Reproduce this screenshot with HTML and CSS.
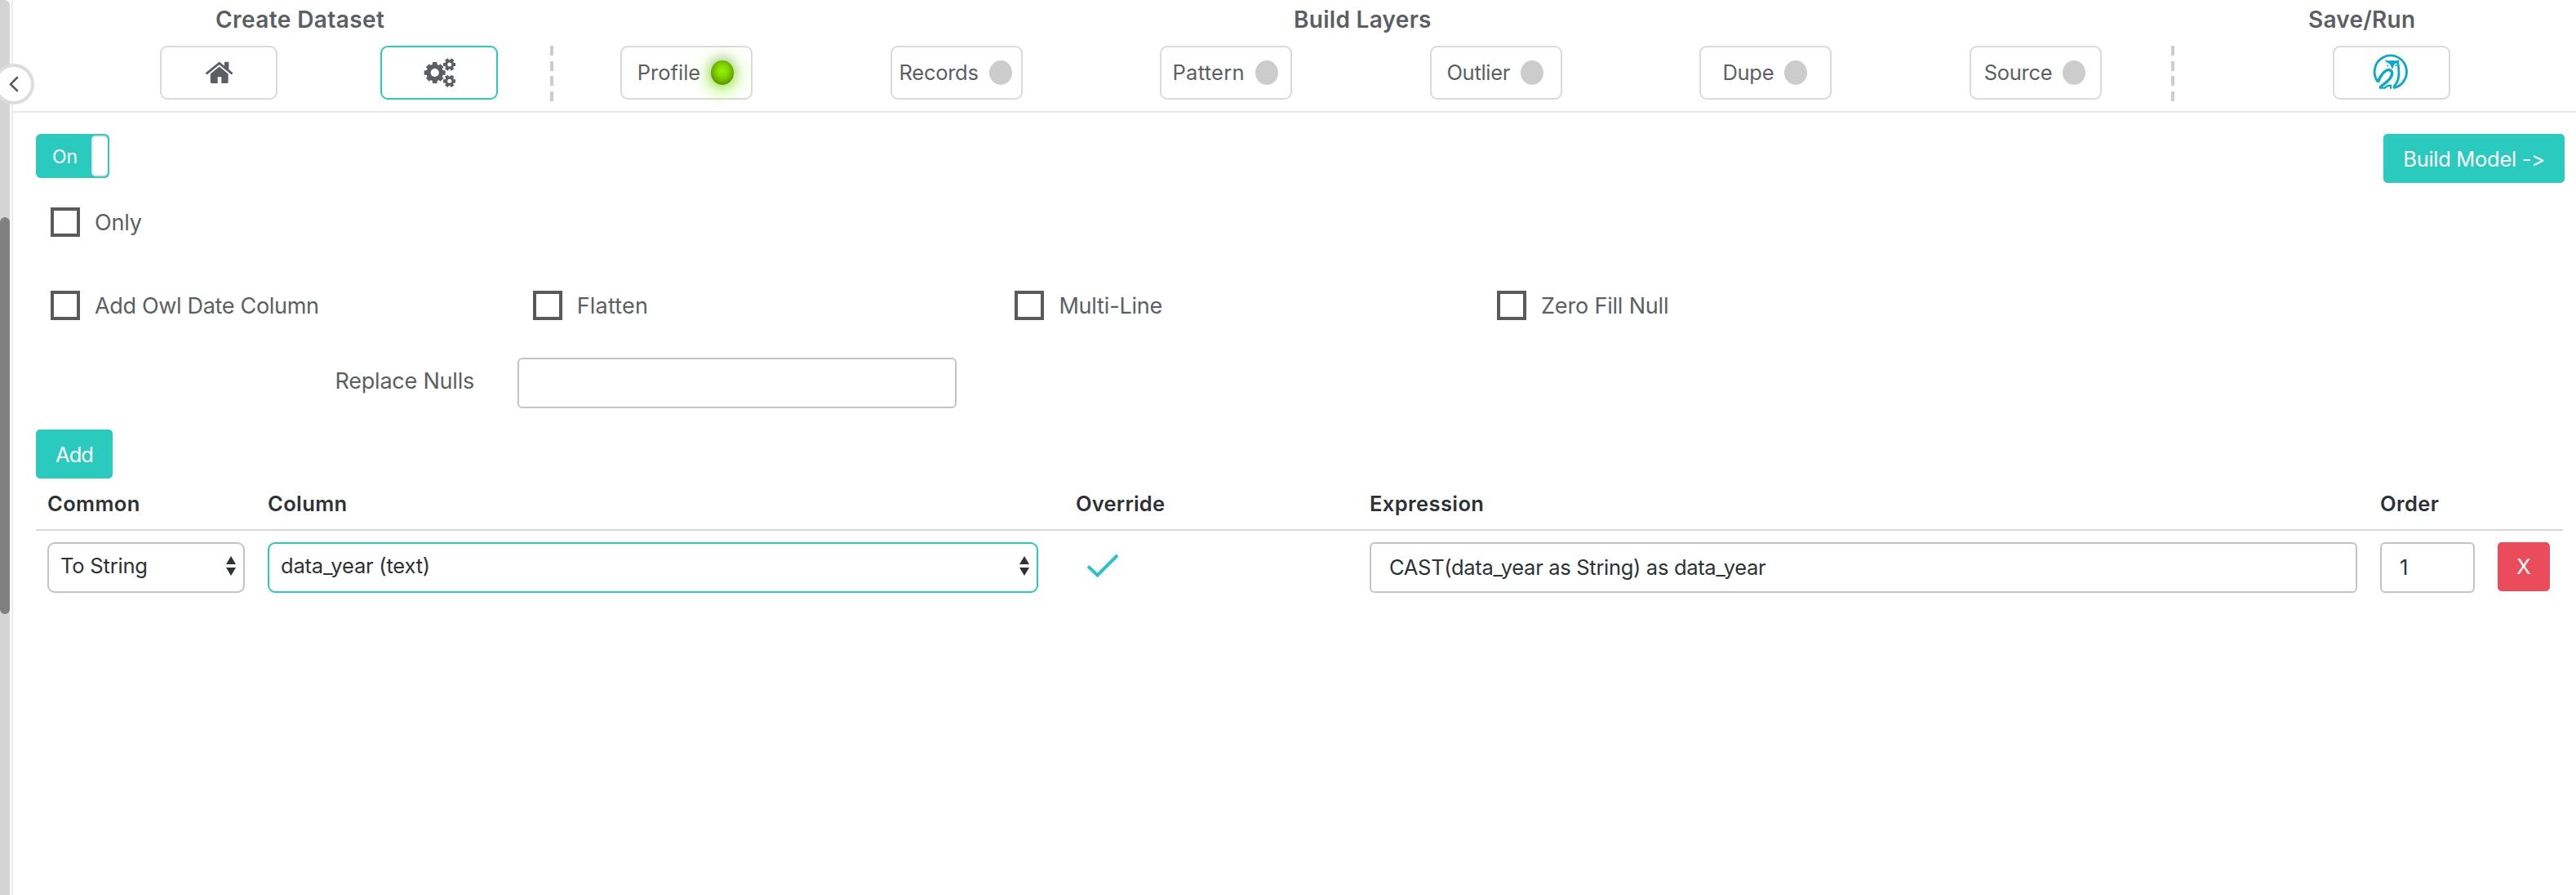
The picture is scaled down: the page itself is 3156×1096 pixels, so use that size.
FILE: index.html
```html
<!DOCTYPE html>
<html lang="en">
<head>
<meta charset="utf-8">
<title>Build Layers</title>
<link rel="stylesheet" href="styles.css">
</head>
<body>
<div class="app">
  <aside class="scroll-track"><div class="scroll-thumb"></div></aside>
  <button class="collapse" aria-label="Collapse">
    <svg width="12" height="20" viewBox="0 0 12 20"><path d="M10 2L2 10.2L10 18" fill="none" stroke="#595c5f" stroke-width="2.6" stroke-linecap="round"/></svg>
  </button>
  <div class="page">
    <header class="header">
      <div class="titles">
        <h2 class="title-create">Create Dataset</h2>
        <h2 class="title-build">Build Layers</h2>
        <h2 class="title-save">Save/Run</h2>
      </div>
      <nav class="steps">
        <div class="step-group create-group">
          <button class="step" aria-label="Home">
            <svg width="34" height="28" viewBox="0 0 34 28" fill="#5b5f63"><path d="M24 1.6q0-.8.8-.8h3.7q.8 0 .8.8v10.2L24 7.5z"/><path d="M2.6 14.6L17.7 2.3L32.6 14.6" fill="none" stroke="#5b5f63" stroke-width="2.8" stroke-linecap="round" stroke-linejoin="round"/><path d="M17.7 6.4L28.6 15.4V25.6q0 1.4-1.4 1.4H20.3V19.2h-4.6V27H8.2q-1.4 0-1.4-1.4V15.4z"/></svg>
          </button>
          <button class="step step-active" aria-label="Settings">
            <svg width="40" height="36" viewBox="0 0 40 36" stroke="#5b5f63" fill="#5b5f63">
              <g stroke-width="5.6"><path d="M14.7 5V31M1.7 18H27.7M5.9 9.2L23.5 26.8M5.9 26.8L23.5 9.2"/></g>
              <circle cx="14.7" cy="18" r="10.4" stroke="none"/><circle cx="14.7" cy="18" r="5.1" fill="#fff" stroke="none"/>
              <g stroke-width="4.2"><path d="M25 8H40.400M28.900 1.4L36.500 14.600M36.500 1.4L28.900 14.600"/><path d="M25 28.300H40.400M28.900 21.700L36.500 34.900M36.500 21.700L28.900 34.900"/></g>
              <circle cx="32.700" cy="8" r="5.700" stroke="none"/><circle cx="32.700" cy="8" r="2.500" fill="#fff" stroke="none"/>
              <circle cx="32.700" cy="28.300" r="5.700" stroke="none"/><circle cx="32.700" cy="28.300" r="2.500" fill="#fff" stroke="none"/>
            </svg>
          </button>
        </div>
        <div class="divider"></div>
        <div class="layers">
          <button class="layer">Profile<span class="led led-on"></span></button>
          <button class="layer ls-tight">Records<span class="led"></span></button>
          <button class="layer ls-wide">Pattern<span class="led"></span></button>
          <button class="layer ls-tight">Outlier<span class="led"></span></button>
          <button class="layer ls-tight">Dupe<span class="led"></span></button>
          <button class="layer ls-tight">Source<span class="led"></span></button>
        </div>
        <div class="divider"></div>
        <button class="step run" aria-label="Run">
          <svg class="owl" width="45" height="47" viewBox="0 0 135 141" fill="none" stroke="#0aa9c6" stroke-width="8.5" stroke-linejoin="round">
            <path d="M19 109A59 60 0 1 1 76 131"/>
            <path d="M19 110C28 84 46 62 61 65C75 69 74 83 62 98C52 110 38 118 26 130" stroke-width="10"/>
            <path d="M24 131H44Q55 120 66 122V134" stroke-width="7"/>
            <path d="M91 36C98 60 98 95 88 112C82 121 79 125 76 131"/>
            <path d="M45 27C54 33 62 30 72 30C82 30 89 33 98 27L95 40C84 37 78 44 75 56L71 61L67 52C64 43 58 39 50 37Z" fill="#0aa9c6" stroke="none"/>
            <circle cx="55" cy="49" r="3" fill="#0aa9c6" stroke="none"/><circle cx="85" cy="48" r="3" fill="#0aa9c6" stroke="none"/>
          </svg>
        </button>
      </nav>
    </header>
    <main class="content">
      <div class="top-row">
        <div class="toggle"><span class="toggle-text">On</span><span class="toggle-knob"></span></div>
        <button class="btn btn-build">Build Model -&gt;</button>
      </div>
      <div class="checks only-row">
        <label class="check"><span class="box"></span>Only</label>
      </div>
      <div class="checks options-row">
        <label class="check ls-date"><span class="box"></span>Add Owl Date Column</label>
        <label class="check ls-flat"><span class="box"></span>Flatten</label>
        <label class="check"><span class="box"></span>Multi-Line</label>
        <label class="check"><span class="box"></span>Zero Fill Null</label>
      </div>
      <div class="replace">
        <label class="replace-label">Replace Nulls</label>
        <div class="field replace-field"></div>
      </div>
      <button class="btn btn-add">Add</button>
      <div class="grid-row head">
        <span>Common</span><span>Column</span><span class="h-override">Override</span><span>Expression</span><span>Order</span>
      </div>
      <div class="grid-row body-row">
        <div class="select common">To String<svg class="arrows" width="14" height="26" viewBox="0 0 14 26" fill="#2d3235"><path d="M7 1L13 11H1zM7 25L13 15H1z"/></svg></div>
        <div class="select column">data_year (text)<svg class="arrows" width="14" height="26" viewBox="0 0 14 26" fill="#2d3235"><path d="M7 1L13 11H1zM7 25L13 15H1z"/></svg></div>
        <svg class="tick" width="40" height="30" viewBox="0 0 40 30"><path d="M2 15.500L13.500 26.500L38 2" fill="none" stroke="#2bc1cc" stroke-width="4"/></svg>
        <div class="field expression">CAST(data_year as String) as data_year</div>
        <div class="field order">1</div>
        <button class="btn btn-delete">X</button>
      </div>
    </main>
  </div>
</div>
</body>
</html>
```
FILE: styles.css
```css
* { box-sizing: border-box; }
body {
  margin: 0;
  background: #fff;
  color: #5b5f63;
  font-family: Inter, "Liberation Sans", sans-serif;
  font-size: 25.5px;
  font-feature-settings: "calt" 0;
}
button {
  margin: 0;
  padding: 0;
  font: inherit;
  font-feature-settings: inherit;
  color: inherit;
  background: #fff;
}
.app { position: relative; display: flex; height: 1096px; overflow: hidden; }
.scroll-track { width: 12px; padding-top: 266px; background: #d4d4d4; border-radius: 0 6px 0 0; }
.scroll-thumb { height: 486px; background: #808080; border-radius: 6px; }
.collapse {
  position: absolute;
  left: -8px;
  top: 78px;
  width: 50px;
  height: 50px;
  display: flex;
  align-items: center;
  justify-content: center;
  border: 4px solid #dcdcdc;
  border-radius: 50%;
}
.page { flex: 1; margin-left: 2px; border-left: 2px solid #ececec; }

.header { height: 138px; border-bottom: 2px solid #e2e7ea; }
.titles { display: grid; grid-template-columns: 1321px 1243px 1fr; padding-left: 248px; height: 56px; }
.titles h2 { margin: 0; font-size: 28px; font-weight: 600; line-height: 48px; }
.title-create { letter-spacing: .42px; }
.title-build { letter-spacing: .29px; }
.title-save { letter-spacing: .24px; }
.steps { display: flex; padding-left: 180px; }
.create-group { display: flex; gap: 126px; margin-right: 64px; }
.step, .layer {
  display: flex;
  align-items: center;
  justify-content: center;
  height: 66px;
  border: 2px solid #dadada;
  border-radius: 9px;
}
.step { width: 144px; }
.step-active { border-color: #2acabf; }
.divider {
  width: 4px;
  height: 68px;
  background: repeating-linear-gradient(#ccc 0 12px, transparent 12px 18.67px);
}
.layers { display: grid; grid-template-columns: repeat(6, 330.6px); width: 1900px; margin: 0 0 0 82px; }
.layer { width: 162px; gap: 13px; padding: 0 2px 1px 0; }
.led { width: 28px; height: 30px; margin-top: 1px; border-radius: 50%; background: #ccc; }
.led-on {
  background: #99f800;
  box-shadow: 0 -2px 14px 2px rgba(0, 0, 0, .2), inset 0 -2px 14px #3c6600, 0 4px 24px #89ff00;
}
.run { margin-left: 194px; }
.owl { margin: -4px 2px 0 0; }
.ls-tight { letter-spacing: -.28px; }
.ls-wide { letter-spacing: .29px; }

.content { padding: 26px 14px 0 28px; }
.top-row { display: flex; justify-content: space-between; height: 60px; }
.toggle {
  display: flex;
  justify-content: space-between;
  width: 90px;
  height: 54px;
  padding: 2px;
  border-radius: 6px;
  background: #2acabf;
}
.toggle-text { padding-left: 18px; color: #fff; font-size: 23px; line-height: 52px; }
.toggle-knob { width: 20px; border: 2px solid #e3e3e6; border-right: 0; border-radius: 5px; background: #fff; }
.btn {
  height: 60px;
  border: 0;
  border-radius: 5px;
  background: #2acabf;
  color: #fff;
  line-height: 62px;
}
.btn-build { width: 222px; letter-spacing: -.3px; }
.checks { padding-left: 18px; display: flex; font-size: 27px; letter-spacing: -.18px; }
.only-row { margin-top: 30px; }
.options-row { display: grid; grid-template-columns: repeat(4, 590.7px); margin-top: 66px; }
.check { display: flex; align-items: center; gap: 18px; height: 36px; }
.box { width: 36px; height: 36px; border: 4px solid #5a5a5a; }
.ls-date { letter-spacing: -.32px; }
.ls-flat { letter-spacing: .2px; }
.replace { display: flex; margin-top: 46px; }
.replace-label {
  width: 537px;
  margin-right: 53px;
  text-align: right;
  font-size: 27px;
  letter-spacing: -.22px;
  line-height: 58px;
}
.field { height: 62px; border: 2px solid #c4c4c4; border-radius: 6px; line-height: 58px; color: #2d3235; }
.replace-field { width: 538px; }
.btn-add { display: block; width: 94px; margin-top: 26px; letter-spacing: -.9px; }

.grid-row { display: grid; grid-template-columns: 270px 990px 360px 1238px 144px 64px; padding-left: 14px; }
.head {
  width: 3096px;
  height: 64px;
  border-bottom: 2px solid #d8d8d8;
  color: #2d3235;
  font-weight: 600;
  line-height: 61px;
  letter-spacing: .4px;
}
.h-override { letter-spacing: .21px; }
.body-row { padding-top: 14px; }
.select {
  display: flex;
  justify-content: space-between;
  align-items: center;
  height: 62px;
  padding: 0 8px 5px 14px;
  border: 2px solid #c4c4c4;
  border-radius: 9px;
  color: #2d3235;
  letter-spacing: -.2px;
}
.common { width: 242px; }
.column { width: 944px; border-color: #2acabf; }
.tick { margin: 14px 0 0 13px; }
.expression { width: 1210px; padding-left: 22px; letter-spacing: -.31px; }
.order { width: 116px; padding-left: 22px; }
.btn-delete { width: 64px; background: #ea4c5b; line-height: 58px; }
```
